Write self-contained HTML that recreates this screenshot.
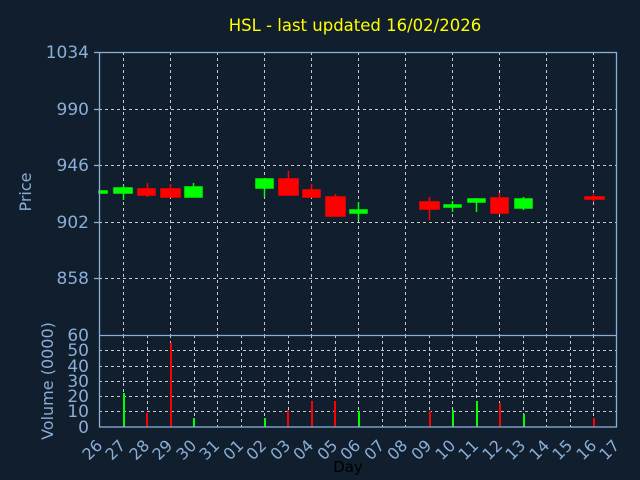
<!DOCTYPE html><html><head><style>body{margin:0;background:#111e2e}svg{display:block}</style></head><body>
<svg width="640" height="480" xmlns="http://www.w3.org/2000/svg" font-family="DejaVu Sans, Liberation Sans, sans-serif">
<rect width="640" height="480" fill="#111e2e"/>
<text x="355" y="31" fill="#ffff00" font-size="16.5" text-anchor="middle">HSL - last updated 16/02/2026</text>
<g stroke="#c8c8c8" stroke-dasharray="3,3" stroke-width="1">
<line x1="99" x2="617" y1="109.5" y2="109.5"/><line x1="99" x2="617" y1="165.5" y2="165.5"/><line x1="99" x2="617" y1="222.5" y2="222.5"/><line x1="99" x2="617" y1="278.5" y2="278.5"/>
<line x1="99" x2="617" y1="350.5" y2="350.5"/><line x1="99" x2="617" y1="366.5" y2="366.5"/><line x1="99" x2="617" y1="381.5" y2="381.5"/><line x1="99" x2="617" y1="396.5" y2="396.5"/><line x1="99" x2="617" y1="411.5" y2="411.5"/>
<line x1="123.5" x2="123.5" y1="52" y2="335"/><line x1="170.5" x2="170.5" y1="52" y2="335"/><line x1="217.5" x2="217.5" y1="52" y2="335"/><line x1="264.5" x2="264.5" y1="52" y2="335"/><line x1="311.5" x2="311.5" y1="52" y2="335"/><line x1="358.5" x2="358.5" y1="52" y2="335"/><line x1="405.5" x2="405.5" y1="52" y2="335"/><line x1="452.5" x2="452.5" y1="52" y2="335"/><line x1="499.5" x2="499.5" y1="52" y2="335"/><line x1="546.5" x2="546.5" y1="52" y2="335"/><line x1="593.5" x2="593.5" y1="52" y2="335"/>
<line x1="123.5" x2="123.5" y1="335" y2="427"/><line x1="147.5" x2="147.5" y1="335" y2="427"/><line x1="170.5" x2="170.5" y1="335" y2="427"/><line x1="194.5" x2="194.5" y1="335" y2="427"/><line x1="217.5" x2="217.5" y1="335" y2="427"/><line x1="241.5" x2="241.5" y1="335" y2="427"/><line x1="264.5" x2="264.5" y1="335" y2="427"/><line x1="288.5" x2="288.5" y1="335" y2="427"/><line x1="311.5" x2="311.5" y1="335" y2="427"/><line x1="335.5" x2="335.5" y1="335" y2="427"/><line x1="358.5" x2="358.5" y1="335" y2="427"/><line x1="382.5" x2="382.5" y1="335" y2="427"/><line x1="405.5" x2="405.5" y1="335" y2="427"/><line x1="429.5" x2="429.5" y1="335" y2="427"/><line x1="452.5" x2="452.5" y1="335" y2="427"/><line x1="476.5" x2="476.5" y1="335" y2="427"/><line x1="499.5" x2="499.5" y1="335" y2="427"/><line x1="523.5" x2="523.5" y1="335" y2="427"/><line x1="546.5" x2="546.5" y1="335" y2="427"/><line x1="570.5" x2="570.5" y1="335" y2="427"/><line x1="593.5" x2="593.5" y1="335" y2="427"/>
</g>
<g stroke-width="1.5">
<g fill="#00ff00" stroke="#00ff00"><rect x="99" y="191" width="8" height="2"/>
<line x1="123.5" y1="185" x2="123.5" y2="200"/><rect x="114" y="188" width="18" height="5"/>
<line x1="193.5" y1="183" x2="193.5" y2="197"/><rect x="185" y="187" width="17" height="10"/>
<line x1="264.5" y1="179" x2="264.5" y2="197"/><rect x="256" y="179" width="17" height="9"/>
<line x1="358.5" y1="202" x2="358.5" y2="220"/><rect x="350" y="210" width="17" height="3"/>
<line x1="452.5" y1="201" x2="452.5" y2="212"/><rect x="444" y="205" width="17" height="2"/>
<line x1="476.5" y1="198" x2="476.5" y2="212"/><rect x="468" y="199" width="17" height="3"/>
<line x1="523.5" y1="197" x2="523.5" y2="210"/><rect x="515" y="199" width="17" height="9"/></g>
<g fill="#ff0000" stroke="#ff0000">
<line x1="147.5" y1="183" x2="147.5" y2="197"/><rect x="138" y="189" width="17" height="6"/>
<line x1="170.5" y1="184" x2="170.5" y2="197"/><rect x="161" y="189" width="19" height="8"/>
<line x1="288.5" y1="171" x2="288.5" y2="195"/><rect x="279" y="179" width="19" height="16"/>
<line x1="311.5" y1="184" x2="311.5" y2="197"/><rect x="303" y="190" width="17" height="7"/>
<line x1="335.5" y1="194" x2="335.5" y2="216"/><rect x="326" y="197" width="19" height="19"/>
<line x1="429.5" y1="197" x2="429.5" y2="220"/><rect x="420" y="202" width="19" height="7"/>
<line x1="499.5" y1="193" x2="499.5" y2="213"/><rect x="491" y="198" width="17" height="15"/>
<line x1="593.5" y1="194" x2="593.5" y2="202"/><rect x="585" y="197" width="19" height="2"/></g>
</g>
<g>
<g fill="#00ff00"><rect x="123" y="393" width="2" height="34"/><rect x="193" y="418" width="2" height="9"/><rect x="264" y="418" width="2" height="9"/><rect x="358" y="411" width="2" height="16"/><rect x="452" y="410" width="2" height="17"/><rect x="476" y="401" width="2" height="26"/><rect x="523" y="414" width="2" height="13"/></g>
<g fill="#ff0000"><rect x="146" y="413" width="2" height="14"/><rect x="170" y="343" width="2" height="84"/><rect x="287" y="410" width="2" height="17"/><rect x="311" y="401" width="2" height="26"/><rect x="334" y="401" width="2" height="26"/><rect x="429" y="411" width="2" height="16"/><rect x="499" y="403" width="2" height="24"/><rect x="593" y="418" width="2" height="9"/></g>
</g>
<g stroke="#8aaed6" stroke-width="1.3" fill="none">
<rect x="99.5" y="52.5" width="517" height="374.5"/><line x1="99" x2="617" y1="335.5" y2="335.5"/>
<line x1="94" x2="99" y1="52.5" y2="52.5"/><line x1="94" x2="99" y1="109.5" y2="109.5"/><line x1="94" x2="99" y1="165.5" y2="165.5"/><line x1="94" x2="99" y1="222.5" y2="222.5"/><line x1="94" x2="99" y1="278.5" y2="278.5"/>
</g>
<g fill="#8aaed6" font-size="17" text-anchor="end">
<text x="89" y="58">1034</text><text x="89" y="115">990</text><text x="89" y="171">946</text><text x="89" y="228">902</text><text x="89" y="284">858</text>
<text x="89" y="341">60</text><text x="89" y="356">50</text><text x="89" y="372">40</text><text x="89" y="387">30</text><text x="89" y="402">20</text><text x="89" y="417">10</text><text x="89" y="433">0</text>
</g>
<text transform="translate(31,192) rotate(-90)" fill="#8aaed6" font-size="16" text-anchor="middle">Price</text>
<text transform="translate(53,381) rotate(-90)" fill="#8aaed6" font-size="16" text-anchor="middle">Volume (0000)</text>
<g fill="#8aaed6" font-size="16">
<text transform="translate(89,461) rotate(-45)">26</text><text transform="translate(112,461) rotate(-45)">27</text><text transform="translate(136,461) rotate(-45)">28</text><text transform="translate(159,461) rotate(-45)">29</text><text transform="translate(183,461) rotate(-45)">30</text><text transform="translate(206,461) rotate(-45)">31</text><text transform="translate(230,461) rotate(-45)">01</text><text transform="translate(253,461) rotate(-45)">02</text><text transform="translate(277,461) rotate(-45)">03</text><text transform="translate(300,461) rotate(-45)">04</text><text transform="translate(324,461) rotate(-45)">05</text><text transform="translate(347,461) rotate(-45)">06</text><text transform="translate(371,461) rotate(-45)">07</text><text transform="translate(394,461) rotate(-45)">08</text><text transform="translate(418,461) rotate(-45)">09</text><text transform="translate(442,461) rotate(-45)">10</text><text transform="translate(465,461) rotate(-45)">11</text><text transform="translate(489,461) rotate(-45)">12</text><text transform="translate(512,461) rotate(-45)">13</text><text transform="translate(536,461) rotate(-45)">14</text><text transform="translate(559,461) rotate(-45)">15</text><text transform="translate(583,461) rotate(-45)">16</text><text transform="translate(606,461) rotate(-45)">17</text>
</g>
<text x="348" y="472" fill="#000000" font-size="15" text-anchor="middle">Day</text>
</svg>
</body></html>
